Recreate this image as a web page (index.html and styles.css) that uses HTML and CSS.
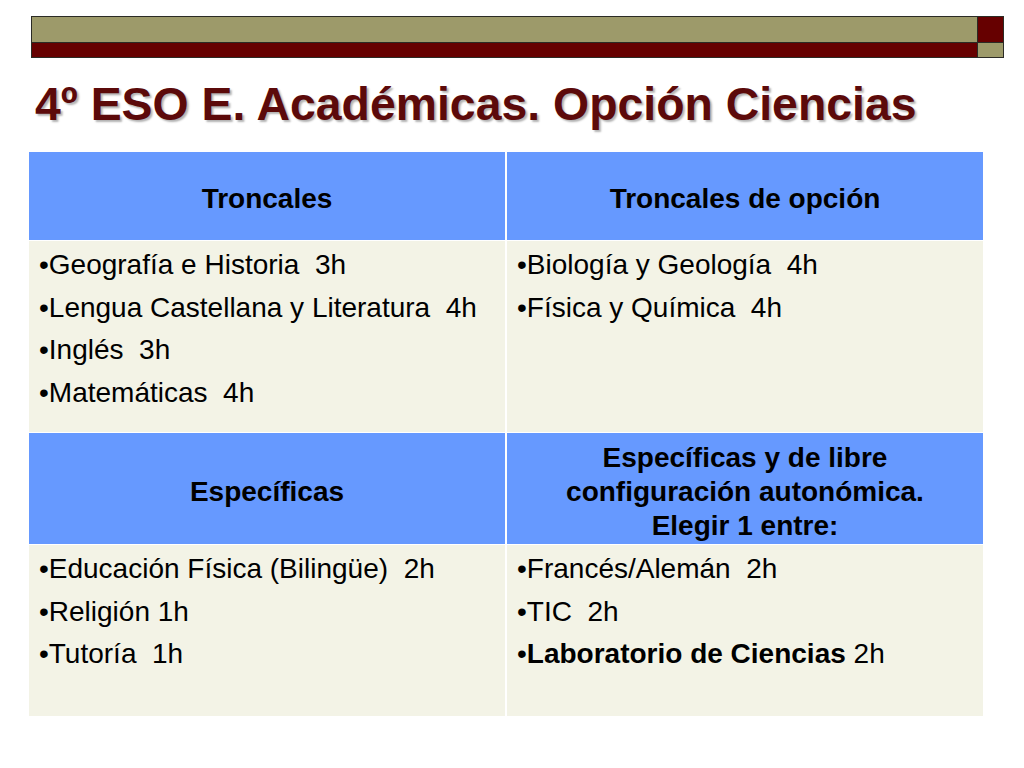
FILE: index.html
```html
<!DOCTYPE html>
<html lang="es">
<head>
<meta charset="utf-8">
<title>4º ESO E. Académicas. Opción Ciencias</title>
<link rel="stylesheet" href="styles.css">
</head>
<body>
<div class="bar">
  <div class="bar-main">
    <div class="seg olive top"></div>
    <div class="seg maroon bottom"></div>
  </div>
  <div class="bar-side">
    <div class="seg maroon top"></div>
    <div class="seg olive bottom"></div>
  </div>
</div>

<h1 class="title">4º ESO E. Académicas. Opción Ciencias</h1>

<div class="table">
  <div class="cell head"><span>Troncales</span></div>
  <div class="cell head"><span>Troncales de opción</span></div>

  <div class="cell body">
    <p>•Geografía e Historia&nbsp; 3h</p>
    <p>•Lengua Castellana y Literatura&nbsp; 4h</p>
    <p>•Inglés&nbsp; 3h</p>
    <p>•Matemáticas&nbsp; 4h</p>
  </div>
  <div class="cell body">
    <p>•Biología y Geología&nbsp; 4h</p>
    <p>•Física y Química&nbsp; 4h</p>
  </div>

  <div class="cell head"><span>Específicas</span></div>
  <div class="cell head"><span>Específicas y de libre<br>configuración autonómica.<br>Elegir 1 entre:</span></div>

  <div class="cell body">
    <p>•Educación Física (Bilingüe)&nbsp; 2h</p>
    <p>•Religión 1h</p>
    <p>•Tutoría&nbsp; 1h</p>
  </div>
  <div class="cell body">
    <p>•Francés/Alemán&nbsp; 2h</p>
    <p>•TIC&nbsp; 2h</p>
    <p>•<b>Laboratorio de Ciencias</b> 2h</p>
  </div>
</div>
</body>
</html>
```

FILE: styles.css
```css
html, body {
  margin: 0;
  padding: 0;
  background: #ffffff;
}

body {
  width: 1024px;
  height: 768px;
  overflow: hidden;
  font-family: "Liberation Sans", Arial, sans-serif;
  color: #000;
}

.bar {
  display: flex;
  gap: 1px;
  box-sizing: border-box;
  width: 973px;
  height: 42px;
  margin: 16px 0 0 31px;
  padding: 1px;
  background: #2b2b25;
}

.bar-main {
  flex: 1;
  display: flex;
  flex-direction: column;
  gap: 1px;
}

.bar-side {
  width: 25px;
  display: flex;
  flex-direction: column;
  gap: 1px;
}

.seg.top {
  height: 25px;
}

.seg.bottom {
  flex: 1;
}

.olive {
  background: #9d9a6a;
}

.maroon {
  background: #660000;
}

.title {
  margin: 20px 0 0 35px;
  font-size: 46.4px;
  line-height: 52px;
  font-weight: bold;
  color: #5c0a0a;
  text-shadow: 2px 2px 2px rgba(0, 0, 0, 0.3);
  white-space: nowrap;
}

.table {
  display: grid;
  grid-template-columns: 476px 476px;
  grid-template-rows: 88px 191px 111px 171px;
  column-gap: 2px;
  row-gap: 1px;
  width: 954px;
  margin: 22px 0 0 29px;
  background: #ffffff;
}

.cell {
  box-sizing: border-box;
  font-size: 28px;
}

.head {
  background: #6699ff;
  display: flex;
  align-items: center;
  justify-content: center;
  text-align: center;
  font-weight: bold;
  line-height: 34px;
  padding-top: 6px;
}

.body {
  background: #f3f3e6;
  padding: 3px 10px 0 10px;
}

.body p {
  margin: 0;
  line-height: 42.5px;
  white-space: nowrap;
}
```
